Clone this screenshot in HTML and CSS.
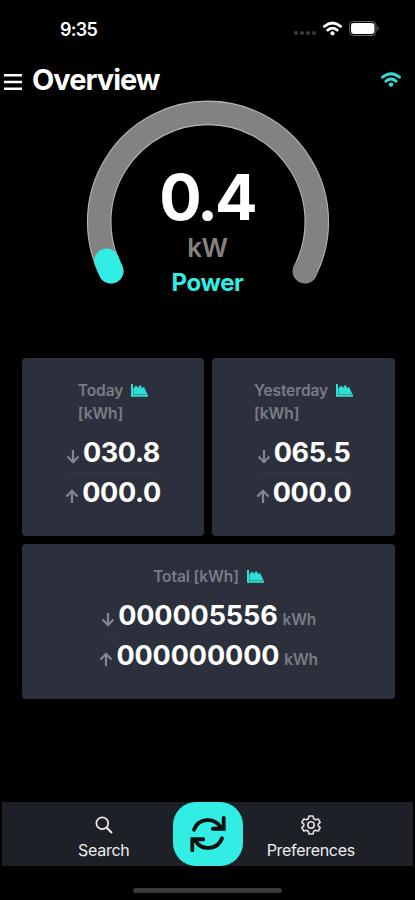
FILE: index.html
```html
<!DOCTYPE html>
<html lang="en">
<head>
    <meta charset="UTF-8">
    <meta name="viewport" content="width=device-width, initial-scale=1.0">
    <title>Overview</title>
    <link rel="stylesheet" href="styles.css">
</head>
<body>
    <!-- Shared icons -->
    <svg class="icon-defs" aria-hidden="true">
        <symbol id="icon-wifi" viewBox="0 0 20 15">
            <path d="M1.5 5.2Q10 -1.8 18.5 5.2M5 9.2Q10 5 15 9.2" fill="none" stroke="currentColor" stroke-width="2.9" stroke-linecap="round"/>
            <circle cx="10" cy="12.6" r="2.2" fill="currentColor"/>
        </symbol>
        <symbol id="icon-chart" viewBox="0 0 17 13">
            <path d="M0 0H2V10.6H17V12.8H0Z" fill="currentColor"/>
            <path d="M2.6 10V4.5L5 1.8L7.2 4L9.2 1L11 4.3L13 3.2L16 10Z" fill="currentColor" stroke="currentColor" stroke-width="0.5"/>
        </symbol>
        <symbol id="icon-down" viewBox="0 0 14 15">
            <path d="M7 1V13M1.5 7.6L7 13.2L12.5 7.6" fill="none" stroke="currentColor" stroke-width="2.2"/>
        </symbol>
        <symbol id="icon-up" viewBox="0 0 14 15">
            <path d="M7 14V2M1.5 7.4L7 1.8L12.5 7.4" fill="none" stroke="currentColor" stroke-width="2.2"/>
        </symbol>
    </svg>

    <div class="status-bar">
        <span class="time">9:35</span>
        <div class="status-icons">
            <span class="dots"><i></i><i></i><i></i><i></i></span>
            <svg class="status-wifi"><use href="#icon-wifi"/></svg>
            <svg class="battery" viewBox="0 0 31 15">
                <rect x="0.5" y="0.5" width="26.5" height="14" rx="4" fill="none" stroke="#666666"/>
                <rect x="2" y="2" width="23.5" height="11" rx="3" fill="#ffffff"/>
                <path d="M28.5 5.3Q31 7.5 28.5 9.7Z" fill="#777777"/>
            </svg>
        </div>
    </div>

    <header class="header">
        <svg class="menu" viewBox="0 0 18 16"><path d="M0 1.3H18M0 8H18M0 14.7H18" stroke="#ffffff" stroke-width="2.4"/></svg>
        <h1 class="title">Overview</h1>
        <svg class="header-wifi"><use href="#icon-wifi"/></svg>
    </header>

    <section class="gauge">
        <svg class="gauge-arc" viewBox="0 0 244 186">
            <path d="M25 171A108.8 108.8 0 1 1 219 171" fill="none" stroke="#b4b4b4" stroke-width="24.6" stroke-linecap="round"/>
            <path d="M25 171A108.8 108.8 0 1 1 219 171" fill="none" stroke="#828282" stroke-width="22.4" stroke-linecap="round"/>
            <path d="M219 171h.01" fill="none" stroke="#828282" stroke-width="24.6" stroke-linecap="round"/>
            <path d="M25 171A108.8 108.8 0 0 1 20.8 161" fill="none" stroke="#32ede4" stroke-width="25" stroke-linecap="round"/>
        </svg>
        <div class="gauge-text">
            <p class="gauge-value">0.4</p>
            <p class="gauge-unit">kW</p>
            <p class="gauge-label">Power</p>
        </div>
    </section>

    <main class="cards">
        <div class="card card-today">
            <div class="card-label"><span>Today<br>[kWh]</span><svg class="chart"><use href="#icon-chart"/></svg></div>
            <div class="reading"><svg class="arrow"><use href="#icon-down"/></svg><b>030.8</b></div>
            <div class="line"></div>
            <div class="reading"><svg class="arrow"><use href="#icon-up"/></svg><b>000.0</b></div>
        </div>
        <div class="card card-yesterday">
            <div class="card-label"><span>Yesterday<br>[kWh]</span><svg class="chart"><use href="#icon-chart"/></svg></div>
            <div class="reading"><svg class="arrow"><use href="#icon-down"/></svg><b>065.5</b></div>
            <div class="line"></div>
            <div class="reading"><svg class="arrow"><use href="#icon-up"/></svg><b>000.0</b></div>
        </div>
        <div class="card card-total">
            <div class="card-label"><span>Total [kWh]</span><svg class="chart"><use href="#icon-chart"/></svg></div>
            <div class="reading"><svg class="arrow"><use href="#icon-down"/></svg><b>000005556</b><small>kWh</small></div>
            <div class="line"></div>
            <div class="reading"><svg class="arrow"><use href="#icon-up"/></svg><b>000000000</b><small>kWh</small></div>
        </div>
    </main>

    <nav class="tab-bar">
        <a class="tab">
            <svg class="tab-icon" viewBox="0 0 20 20" fill="none" stroke="#e8e8e8" stroke-width="1.8"><circle cx="8.3" cy="8.3" r="5.9"/><path d="M12.5 12.5L18 18" stroke-width="2.2"/></svg>
            <span>Search</span>
        </a>
        <button class="refresh" aria-label="Refresh">
            <svg viewBox="0 0 42 42" fill="none" stroke="#06100f" stroke-width="4" stroke-linecap="round">
                <path d="M6.3 16.5A15.6 15.6 0 0 1 34 13.5"/>
                <path d="M37.5 4V15.5H26"/>
                <path d="M35.7 25.5A15.6 15.6 0 0 1 8 28.5"/>
                <path d="M4.5 38V26.5H16"/>
            </svg>
        </button>
        <a class="tab">
            <svg class="tab-icon" viewBox="0 0 20 20" fill="none" stroke="#e0e0e0" stroke-width="1.6" stroke-linejoin="round">
                <path d="M8 1H12L12.7 3.7L14.5 4.8L17.2 4L19.2 7.4L17.2 9.2V10.8L19.2 12.6L17.2 16L14.5 15.2L12.7 16.3L12 19H8L7.3 16.3L5.5 15.2L2.8 16L.8 12.6L2.8 10.8V9.2L.8 7.4L2.8 4L5.5 4.8L7.3 3.7Z"/>
                <circle cx="10" cy="10" r="3.2"/>
            </svg>
            <span>Preferences</span>
        </a>
    </nav>
    <div class="home-indicator"></div>
</body>
</html>
```
FILE: styles.css
```css
* {
    margin: 0;
    padding: 0;
    box-sizing: border-box;
}

body {
    font-family: Inter, 'Liberation Sans', sans-serif;
    background-color: #000000;
    color: #ffffff;
    width: 415px;
    height: 900px;
    display: flex;
    flex-direction: column;
    overflow: hidden;
}

svg {
    display: block;
    flex-shrink: 0;
}

.icon-defs {
    position: absolute;
    width: 0;
    height: 0;
}

.status-bar {
    height: 58px;
    padding: 0 35px 0 60px;
    display: flex;
    align-items: center;
    justify-content: space-between;
}

.time {
    font-size: 18px;
    font-weight: 600;
    letter-spacing: -0.7px;
}

.status-icons {
    display: flex;
    align-items: center;
    margin-top: -2px;
}

.dots {
    display: flex;
    gap: 2px;
    margin: 9px 7px 0 0;
}

.dots i {
    width: 4px;
    height: 4px;
    border-radius: 50%;
    background-color: #3b3b3b;
}

.status-wifi {
    width: 19px;
    height: 15px;
    margin-right: 7px;
}

.battery {
    width: 31px;
    height: 15px;
}

.header {
    height: 43px;
    padding: 0 14px 0 4px;
    display: flex;
    align-items: center;
}

.menu {
    width: 18px;
    height: 16px;
    margin: 5px 10px 0 0;
}

.title {
    font-size: 29px;
    font-weight: 700;
    line-height: 43px;
    letter-spacing: -1px;
}

.header-wifi {
    width: 20px;
    height: 15px;
    margin-left: auto;
    color: #32ddd5;
}

.gauge {
    height: 257px;
    display: grid;
    justify-items: center;
    align-items: start;
}

.gauge-arc,
.gauge-text {
    grid-area: 1 / 1;
}

.gauge-arc {
    width: 244px;
    height: 186px;
    margin: -1px 0 0 1px;
}

.gauge-text {
    padding-top: 65px;
    text-align: center;
}

.gauge-value {
    font-size: 63px;
    font-weight: 700;
    line-height: 63px;
    letter-spacing: -3px;
    text-indent: -1px;
}

.gauge-unit {
    color: #828282;
    font-size: 26px;
    font-weight: 600;
    line-height: 31px;
    letter-spacing: -0.4px;
    margin-top: 3px;
}

.gauge-label {
    color: #32ede4;
    font-size: 24px;
    font-weight: 700;
    line-height: 30px;
    letter-spacing: -0.4px;
    margin-top: 5px;
}

.cards {
    width: 373px;
    margin-left: 22px;
    display: grid;
    grid-template-columns: 182px 183px;
    grid-template-rows: 178px 155px;
    gap: 8px;
}

.card {
    background-color: #2c303c;
    border-radius: 4px;
    display: flex;
    flex-direction: column;
    align-items: center;
    padding-top: 21px;
}

.card-total {
    grid-column: 1 / 3;
}

.card-label {
    color: #797c85;
    font-size: 15.5px;
    font-weight: 600;
    line-height: 23px;
    letter-spacing: -0.1px;
    display: flex;
    gap: 8px;
}

.chart {
    width: 17px;
    height: 13px;
    margin-top: 5px;
    color: #32ddd5;
}

.reading {
    height: 40px;
    display: flex;
    align-items: center;
}

.card-label + .reading {
    margin-top: 7px;
}

.line {
    width: 92px;
    height: 1px;
    margin-bottom: -1px;
    background-color: #343742;
}

.card-total .line {
    width: 12px;
    margin-left: -195px;
}

.arrow {
    width: 14px;
    height: 15px;
    margin: 8px 3px 0 0;
    color: #85878f;
}

.reading b {
    font-size: 27px;
    font-weight: 700;
    letter-spacing: -0.1px;
}

.card-today b,
.card-yesterday b {
    letter-spacing: -0.35px;
}

.reading small {
    color: #797c85;
    font-size: 15.5px;
    font-weight: 600;
    letter-spacing: -0.3px;
    margin: 8px 0 0 5px;
}

.tab-bar {
    width: 411px;
    height: 64px;
    margin: 103px 0 0 2px;
    background-color: #1d2026;
    display: grid;
    grid-template-columns: 1fr 70px 1fr;
}

.tab {
    display: flex;
    flex-direction: column;
    align-items: center;
    color: #eeeeee;
    font-size: 16px;
    line-height: 20px;
    letter-spacing: -0.3px;
    padding-top: 13px;
}

.tab:first-child {
    padding-left: 33px;
}

.tab:last-child {
    padding-right: 34px;
}

.tab-icon {
    width: 20px;
    height: 20px;
    margin-bottom: 5px;
}

.refresh {
    width: 70px;
    height: 64px;
    border: none;
    border-radius: 23px;
    background-color: #32ede4;
    display: flex;
    align-items: center;
    justify-content: center;
}

.refresh svg {
    width: 40px;
    height: 40px;
}

.home-indicator {
    width: 149px;
    height: 5px;
    margin: 22px auto 0;
    border-radius: 3px;
    background-color: #3a3a3a;
}
```
